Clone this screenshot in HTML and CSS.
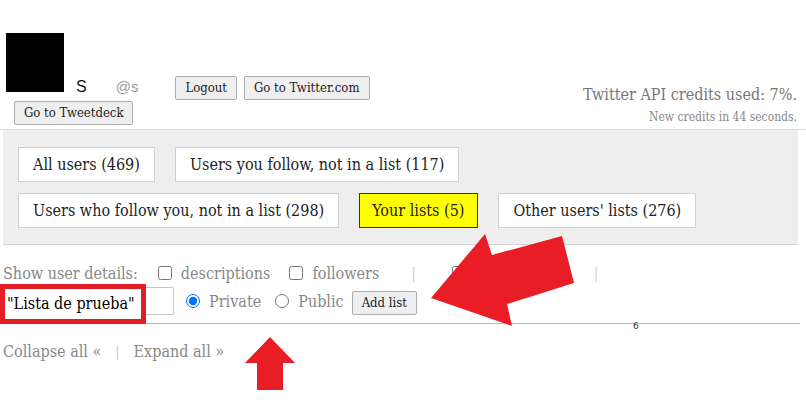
FILE: index.html
```html
<!DOCTYPE html>
<html>
<head>
	<meta charset="UTF-8">
	<title>Listas</title>
	<link rel="stylesheet" href="styles.css">
</head>
<body>
	<div class="page">
		<!--cabecera: usuario y créditos-->
		<div class="top">
			<div class="user">
				<div class="user-row">
					<div class="avatar"></div>
					<span class="name">S</span>
					<span class="handle">@s</span>
					<button class="btn logout">Logout</button>
					<button class="btn twitter">Go to Twitter.com</button>
				</div>
				<button class="btn tweetdeck">Go to Tweetdeck</button>
			</div>
			<div class="credits">
				<div class="credits-used">Twitter API credits used: 7%.</div>
				<div class="credits-new">New credits in 44 seconds.</div>
			</div>
		</div>

		<!--pestañas-->
		<div class="nav">
			<div class="nav-row">
				<a class="tab" href="javascript:;">All users (469)</a>
				<a class="tab" href="javascript:;">Users you follow, not in a list (117)</a>
			</div>
			<div class="nav-row">
				<a class="tab" href="javascript:;">Users who follow you, not in a list (298)</a>
				<a class="tab active" href="javascript:;">Your lists (5)</a>
				<a class="tab" href="javascript:;">Other users' lists (276)</a>
			</div>
		</div>

		<div class="details">
			<span class="label">Show user details:</span>
			<label class="opt first"><input type="checkbox"> descriptions</label>
			<label class="opt"><input type="checkbox"> followers</label>
			<span class="sep">|</span>
			<label class="opt after-sep"><input type="checkbox"> statistics</label>
			<span class="sep last">|</span>
		</div>

		<div class="add">
			<input class="list-name" type="text">
			<label class="opt radio"><input type="radio" name="mode" checked> Private</label>
			<label class="opt radio"><input type="radio" name="mode"> Public</label>
			<button class="btn add-btn">Add list</button>
			<div class="callout">"Lista de prueba"</div>
		</div>

		<div class="toggle">
			<a href="javascript:;">Collapse all «</a>
			<span class="sep">|</span>
			<a href="javascript:;">Expand all »</a>
		</div>

		<!--flechas rojas encima de la página-->
		<svg class="marks" width="806" height="410" viewBox="0 0 806 410">
			<polygon fill="#e91d25" points="431,298 485,234 492,255 562,236 574,283 507,304 512,326" />
			<polygon fill="#e91d25" points="270,337 295,363 283,363 283,390 257,390 257,363 245,363" />
			<text x="633" y="329" font-size="9" fill="#333" font-family="DejaVu Sans, sans-serif">6</text>
		</svg>
	</div>
</body>
</html>
```

FILE: styles.css
```css
* {
	margin: 0;
	padding: 0;
	box-sizing: border-box;
}

body {
	background: #fff;
	font-family: "DejaVu Serif Condensed", "DejaVu Serif", serif;
	color: #222;
}

.page {
	position: relative;
	width: 806px;
	height: 410px;
	overflow: hidden;
}

.btn {
	font-family: "DejaVu Serif Condensed", "DejaVu Serif", serif;
	font-size: 13px;
	line-height: 16px;
	padding: 3px 9px;
	color: #222;
	background: #efefef;
	border: 1px solid #adadad;
	border-radius: 2px;
}

/*cabecera*/
.top {
	display: flex;
	justify-content: space-between;
	align-items: flex-end;
	padding: 33px 9px 4px 6px;
	border-bottom: 1px solid #cfe2dd;
}

.user-row {
	display: flex;
	align-items: baseline;
}

.avatar {
	width: 58px;
	height: 59px;
	background: #000;
}

.name {
	margin-left: 12px;
	font-family: "Liberation Sans", Arial, sans-serif;
	font-size: 16px;
	color: #111;
}

.handle {
	margin-left: 29px;
	font-family: "Liberation Sans", Arial, sans-serif;
	font-size: 15px;
	color: #9a9a9a;
}

.logout {
	margin-left: 37px;
}

.twitter {
	margin-left: 7px;
}

.tweetdeck {
	margin: 1px 0 0 8px;
}

.credits {
	text-align: right;
	color: #777;
}

.credits-used {
	font-size: 16px;
	line-height: 20px;
}

.credits-new {
	margin-top: 4px;
	font-size: 12px;
	line-height: 16px;
	color: #888;
}

/*pestañas*/
.nav {
	margin: 0 8px 0 3px;
	padding: 17px 15px 16px;
	background: #eee;
	border-bottom: 1px solid #d4d4d4;
	display: flex;
	flex-direction: column;
	gap: 11px;
}

.nav-row {
	display: flex;
	gap: 20px;
}

.tab {
	display: block;
	height: 35px;
	line-height: 33px;
	padding: 0 14px;
	font-size: 16px;
	color: #222;
	text-decoration: none;
	background: #fff;
	border: 1px solid #d0d0d0;
}

.tab.active {
	background: #ffff00;
	border-color: #333;
	padding: 0 13px 0 12px;
}

/*opciones*/
.details {
	display: flex;
	align-items: center;
	height: 24px;
	margin-top: 16px;
	padding-left: 3px;
	font-size: 16px;
	color: #888;
}

.opt {
	display: flex;
	align-items: center;
	margin-left: 19px;
}

.opt input {
	width: 14px;
	height: 14px;
	margin: 0 9px 0 0;
}

.opt.first {
	margin-left: 20px;
}

.opt.after-sep {
	margin-left: 36px;
}

.sep {
	margin-left: 32px;
	color: #ccc;
	font-size: 14px;
}

.sep.last {
	margin-left: 54px;
}

.add {
	position: relative;
	display: flex;
	align-items: center;
	height: 39px;
	padding: 2px 0 8px 3px;
	margin-right: 6px;
	border-bottom: 1px solid #bbb;
	font-size: 16px;
	color: #888;
}

.list-name {
	width: 171px;
	height: 28px;
	border: 1px solid #c4c4c4;
	border-radius: 2px;
}

.radio {
	margin-left: 12px;
}

.add .radio + .radio {
	margin-left: 14px;
}

.add-btn {
	margin-left: 8px;
	align-self: flex-end;
}

.callout {
	position: absolute;
	left: 0;
	top: -1px;
	width: 146px;
	height: 40px;
	border: 5px solid #e41e26;
	background: #fff;
	padding-left: 2px;
	font-size: 16px;
	line-height: 30px;
	white-space: nowrap;
	overflow: hidden;
	color: #000;
}

.toggle {
	display: flex;
	align-items: center;
	height: 24px;
	margin-top: 15px;
	padding-left: 3px;
	font-size: 16px;
	color: #888;
}

.toggle a {
	color: #888;
	text-decoration: none;
}

.toggle .sep {
	margin: 0 14px;
}

.marks {
	position: absolute;
	left: 0;
	top: 0;
	pointer-events: none;
}
```
